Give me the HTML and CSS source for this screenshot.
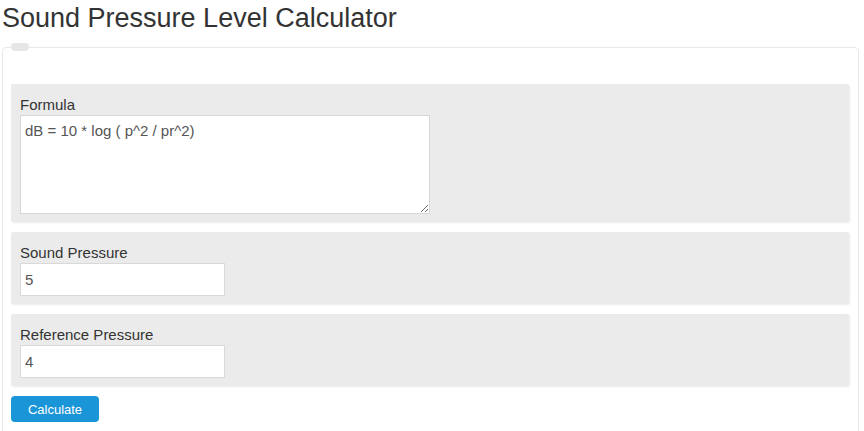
FILE: index.html
```html
<!DOCTYPE html>
<html>
<head>
<meta charset="utf-8">
<title>Sound Pressure Level Calculator</title>
<link rel="stylesheet" href="styles.css">
</head>
<body>
<div class="page">
  <h1 class="title">Sound Pressure Level Calculator</h1>
  <fieldset class="calc">
    <legend class="calc-legend"></legend>
    <div class="field">
      <label class="field-label">Formula</label>
      <textarea class="field-area">dB = 10 * log ( p^2 / pr^2)</textarea>
    </div>
    <div class="field">
      <label class="field-label">Sound Pressure</label>
      <input class="field-input" type="text" value="5">
    </div>
    <div class="field">
      <label class="field-label">Reference Pressure</label>
      <input class="field-input" type="text" value="4">
    </div>
    <button class="calc-btn" type="button">Calculate</button>
  </fieldset>
</div>
</body>
</html>
```
FILE: styles.css
```css
html, body {
  margin: 0;
  padding: 0;
  background: #fff;
}
body {
  font-family: "Liberation Sans", Arial, sans-serif;
  color: #333;
}
.page {
  padding: 0 5px 0 2px;
}
.title {
  margin: 0;
  padding-top: 3px;
  font-size: 27px;
  font-weight: normal;
  line-height: 30px;
  color: #333;
  height: 40px;
}
.calc {
  margin: 0;
  border: 1px solid #e9e9e9;
  border-radius: 4px;
  padding: 33px 9px 20px 8px;
  display: flex;
  flex-direction: column;
  gap: 10px;
  align-items: stretch;
}
.calc-legend {
  width: 18px;
  height: 8px;
  padding: 0;
  margin-left: 0px;
  background: #e6e6e6;
  border-radius: 5px;
}
.field {
  background: #ebebeb;
  padding: 10px 9px 8px 9px;
  border-radius: 2px;
  box-shadow: 1px 1px 2px rgba(0,0,0,0.08);
  display: flex;
  flex-direction: column;
  align-items: flex-start;
}
.field-label {
  font-size: 15px;
  line-height: 21px;
  color: #333;
}
.field-area {
  box-sizing: border-box;
  width: 410px;
  height: 99px;
  margin: 0;
  border: 1px solid #d6d6d6;
  padding: 6px 4px;
  font-family: "Liberation Sans", Arial, sans-serif;
  font-size: 15px;
  line-height: 18px;
  color: #555;
  background: #fff;
  resize: both;
}
.field-input {
  box-sizing: border-box;
  width: 205px;
  height: 33px;
  margin: 0;
  border: 1px solid #d9d9d9;
  padding: 0 4px;
  font-family: "Liberation Sans", Arial, sans-serif;
  font-size: 15px;
  color: #555;
  background: #fff;
}
.calc-btn {
  align-self: flex-start;
  width: 88px;
  height: 26px;
  border: none;
  border-radius: 4px;
  background: #1a95d8;
  color: #fff;
  font-family: "Liberation Sans", Arial, sans-serif;
  font-size: 13px;
  padding: 0;
  margin-top: 0;
}
```
